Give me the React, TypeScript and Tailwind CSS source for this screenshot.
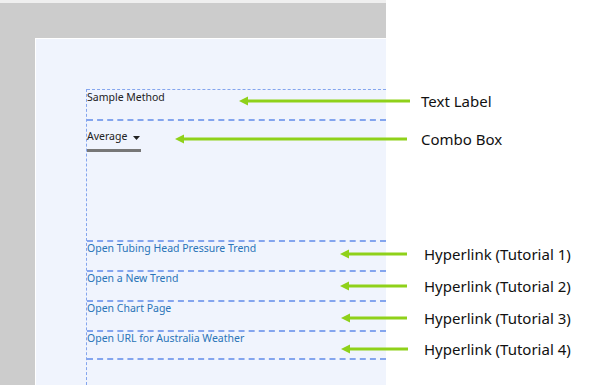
import React from "react";

type Note = { top: number; from: number; to: number; labelX: number; text: string };

const notes: Note[] = [
  { top: 101, from: 239, to: 410, labelX: 421, text: "Text Label" },
  { top: 139, from: 175, to: 407, labelX: 421, text: "Combo Box" },
  { top: 254, from: 340, to: 407, labelX: 424, text: "Hyperlink (Tutorial 1)" },
  { top: 286, from: 340, to: 407, labelX: 424, text: "Hyperlink (Tutorial 2)" },
  { top: 318, from: 341, to: 407, labelX: 424, text: "Hyperlink (Tutorial 3)" },
  { top: 349, from: 341, to: 408, labelX: 424, text: "Hyperlink (Tutorial 4)" },
];

const links = [
  "Open Tubing Head Pressure Trend",
  "Open a New Trend",
  "Open Chart Page",
  "Open URL for Australia Weather",
];

const Callout: React.FC<{ note: Note }> = ({ note }) => {
  const len = note.to - note.from;
  return (
    <div
      className="absolute flex items-center h-[20px]"
      style={{ left: note.from, top: note.top - 10 }}
    >
      <svg width={len} height={10} viewBox={`0 0 ${len} 10`} className="shrink-0">
        <polygon points="0,5 9,0.5 9,9.5" fill="#8fd11a" />
        <rect x={8} y={3.5} width={len - 8} height={3} fill="#8fd11a" />
      </svg>
      <span
        className="absolute whitespace-nowrap text-[15px] leading-[20px] text-[#111]"
        style={{ left: note.labelX - note.from }}
      >
        {note.text}
      </span>
    </div>
  );
};

export default function App() {
  return (
    <div className="relative w-[589px] h-[385px] overflow-hidden bg-white font-['Noto_Sans',sans-serif]">
      <div className="flex h-full">
        <div className="w-[386px] h-full flex flex-col bg-[#cccccc]">
          <div className="h-[3px] bg-[#efefef]" />
          <div className="flex-1 pl-[35px] pt-[35px]">
            <div className="h-full border-l border-t border-white bg-[#f0f4fd] pl-[50px] pt-[50px]">
              <div className="h-full border-l border-dashed border-[#84a5ee]">
                <div className="h-[30px] border-t border-dashed border-[#84a5ee] pt-[1px] text-[10.5px] leading-[13px] text-[#222]">
                  Sample Method
                </div>
                <div className="h-[121px] border-t-2 border-dashed border-[#84a5ee] pt-[1px]">
                  <div className="inline-flex flex-col">
                    <div className="flex items-center text-[10.5px] leading-[13px] text-[#222]">
                      <span>Average</span>
                      <svg width="7" height="4" viewBox="0 0 7 4" className="ml-[6px] mt-[2px]">
                        <polygon points="0,0 7,0 3.5,4" fill="#222" />
                      </svg>
                    </div>
                    <div className="mt-[6px] h-[3px] w-[54px] bg-[#777777]" />
                  </div>
                </div>
                {links.map((l, i) => (
                  <div
                    key={l}
                    className={`h-[30px] border-t-2 border-dashed border-[#84a5ee] pt-[0px] text-[10.5px] leading-[13px] text-[#2a74b8] ${
                      i === links.length - 1 ? "border-b-2" : ""
                    }`}
                  >
                    <a href="#" className="hover:underline">
                      {l}
                    </a>
                  </div>
                ))}
              </div>
            </div>
          </div>
        </div>
        <div className="flex-1" />
      </div>
      {notes.map((n) => (
        <Callout key={n.text} note={n} />
      ))}
    </div>
  );
}
